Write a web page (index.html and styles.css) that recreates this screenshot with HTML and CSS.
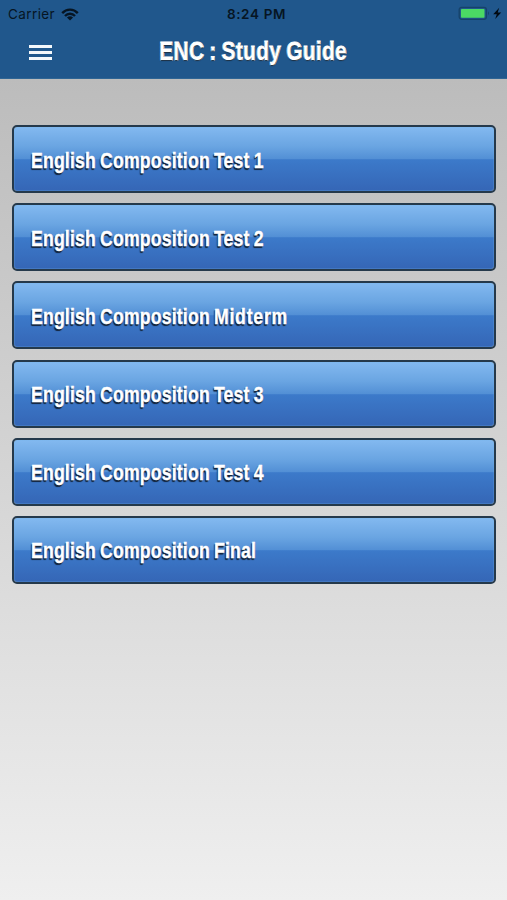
FILE: index.html
```html
<!DOCTYPE html>
<html lang="en">
<head>
<meta charset="utf-8">
<title>ENC : Study Guide</title>
<link rel="stylesheet" href="styles.css">
</head>
<body>
<header class="header">
  <div class="status">
    <div class="status-left">
      <span>Carrier</span>
      <svg width="18" height="13" viewBox="0 0 18 13" fill="none" stroke="#061523" stroke-width="2.4"><path d="M1.2 5.1C5.5.5 12.5.5 16.8 5.1M4 8C6.8 5 11.2 5 14 8"/><path d="M5.9 9.5Q9 7 12.1 9.5L9 12.5Z" fill="#061523" stroke="none"/></svg>
    </div>
    <span class="clock">8:24 PM</span>
    <div class="status-right">
      <svg width="44" height="16" viewBox="0 0 44 16"><rect x="1.2" y="1.3" width="27.2" height="12" rx="2.5" fill="none" stroke="#164269" stroke-width="1.3"/><rect x="3" y="3" width="23.5" height="8.8" rx=".8" fill="#4bd964"/><path d="M30 5.3q2 2 0 4z" fill="#164269"/><path d="M41.2 1.8L35.2 8.2H38.8L37.2 13L43.2 6.4H39.7Z" fill="#020a12"/></svg>
    </div>
  </div>
  <div class="navbar">
    <button class="menu" aria-label="Menu"><i></i><i></i><i></i></button>
    <h1 class="title"><span>ENC : Study Guide</span></h1>
    <div></div>
  </div>
</header>
<main class="list">
  <a class="item"><span>English Composition Test 1</span></a>
  <a class="item"><span>English Composition Test 2</span></a>
  <a class="item"><span>English Composition <b class="wide">Midterm</b></span></a>
  <a class="item"><span>English Composition Test 3</span></a>
  <a class="item"><span>English Composition Test 4</span></a>
  <a class="item"><span>English Composition Final</span></a>
</main>
</body>
</html>
```
FILE: styles.css
```css
* { box-sizing: border-box; }
html { height: 100%; }
body {
  margin: 0;
  height: 900px;
  overflow: hidden;
  font-family: "Liberation Sans", Arial, sans-serif;
  background: linear-gradient(#bcbcbc 79px, #efefef 900px);
}
.header {
  height: 79px;
  background: #20578c;
  border-bottom: 1px solid #2f6594;
}
.status {
  display: grid;
  grid-template-columns: 1fr auto 1fr;
  align-items: center;
  height: 27px;
  padding: 0 5px 0 8px;
  font: 500 13px/27px Inter, sans-serif;
  color: #061523;
}
.status-left {
  display: flex;
  align-items: center;
  gap: 6px;
  padding-top: 1px;
  font-weight: 400;
  font-size: 13.5px;
  letter-spacing: .4px;
}
.clock {
  margin-left: 3px;
  padding-top: 1px;
  font-weight: 600;
  font-size: 13.5px;
  letter-spacing: .65px;
}
.status-right { display: flex; justify-content: flex-end; }
.navbar {
  display: grid;
  grid-template-columns: 80px 1fr 80px;
  align-items: center;
  height: 49px;
}
.menu {
  display: grid;
  gap: 3px;
  width: 23px;
  margin: 1px 0 0 29px;
  padding: 0;
  border: 0;
  background: none;
}
.menu i { height: 3px; background: #f4f8fb; }
.title {
  margin: -2px 0 0;
  text-align: center;
  font-size: 25px;
  line-height: 30px;
  color: #fff;
  white-space: nowrap;
}
.title span {
  display: inline-block;
  transform: scaleX(.83);
  letter-spacing: .5px;
  word-spacing: -1.5px;
  -webkit-text-stroke: 1.1px #fff;
  paint-order: stroke fill;
  text-shadow: 0 1px 1px #12283e;
}
.list {
  display: grid;
  grid-auto-rows: 68px;
  gap: 10.2px;
  padding: 46px 11px 0 12px;
}
.item {
  display: flex;
  align-items: center;
  padding: 3px 17px 0;
  border: 2px solid #25394b;
  border-radius: 5px;
  box-shadow: inset 0 0 0 1px #70b4ee38;
  background: linear-gradient(#83b9f0 0%, #6aa5e2 30%, #528fd5 50%, #3c7aca 51%, #3566b6 100%) padding-box;
  color: #fff;
  font-size: 22px;
  font-weight: 700;
  line-height: 26px;
  white-space: nowrap;
}
.item span {
  transform: scaleX(.8);
  transform-origin: left;
  letter-spacing: .25px;
  word-spacing: -1.2px;
  -webkit-text-stroke: .4px #fff;
  text-shadow: -1px 1px 1px #14253c, -1px 2px 1px #14253c;
}
.item .wide { letter-spacing: 1px; }
```
